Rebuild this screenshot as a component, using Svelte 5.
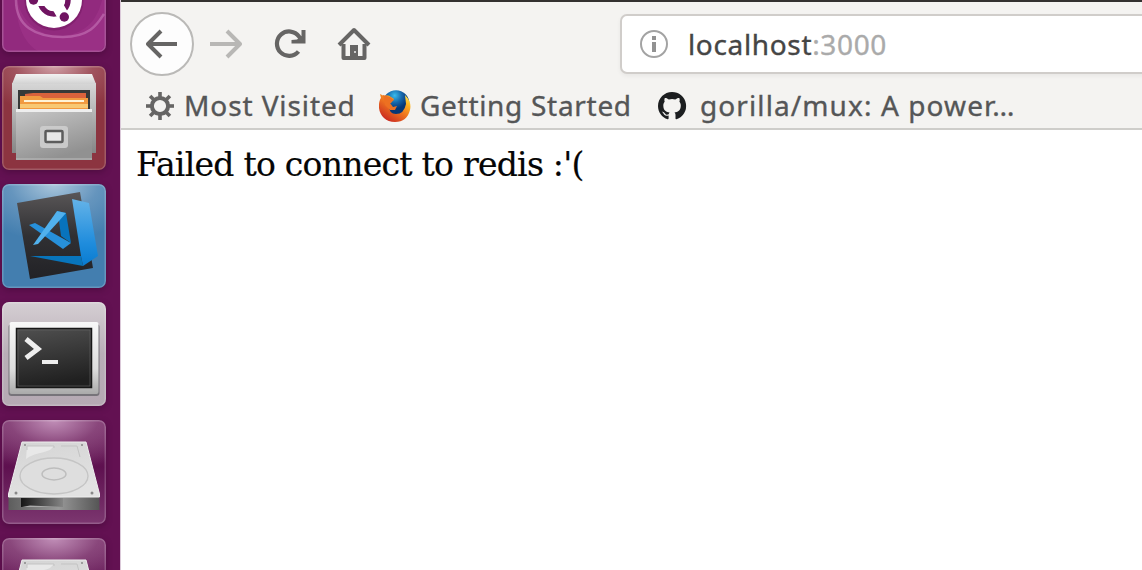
<script>
  const bookmarks = [
    { icon: 'gear', label: 'Most Visited', cls: 'b1' },
    { icon: 'firefox', label: 'Getting Started', cls: 'b2' },
    { icon: 'github', label: 'gorilla/mux: A power…', cls: 'b3' }
  ];
  const apps = ['ubuntu', 'files', 'code', 'terminal', 'disk', 'disk'];
  const teeth = [0, 45, 90, 135, 180, 225, 270, 315];
</script>

<div class="screen">
  <nav class="launcher">
    {#each apps as app}
      <div class="tile {app}">
        <svg viewBox="0 0 104 104" width="104" height="104">
          {#if app === 'ubuntu'}
            <path d="M15 50C12 80 26 98 36 103H93C101 103 103 99 103 89V30C101 70 86 85 61 88C36 89 18 72 15 50" fill="#c04aa5" opacity=".2" />
            <path d="M14 52C14 78 33 89 61 89S96 75 102 66" fill="none" stroke="#d48bc8" stroke-width="2.5" opacity=".45" />
            <circle cx="52" cy="53" r="29.5" fill="#6b1459" opacity=".4" />
            <circle cx="52" cy="52" r="28" fill="#fff" />
            <circle cx="52" cy="52" r="14" fill="none" stroke="#701461" stroke-width="5.5" />
            <path d="M52 52 30 52M52 52 63 71M52 52 63 33" stroke="#fff" stroke-width="12" />
            <circle cx="52" cy="52" r="11" fill="#fff" />
            <circle cx="31.5" cy="52" r="4.7" fill="#701461" /><circle cx="62.3" cy="69" r="4.7" fill="#701461" /><circle cx="62" cy="34" r="4.7" fill="#701461" />
          {:else if app === 'files'}
            <defs>
              <linearGradient id="metal" x2="0" y2="1"><stop stop-color="#d7d7d7" /><stop offset="1" stop-color="#858585" /></linearGradient>
              <linearGradient id="front" x2=".45" y2="1"><stop stop-color="#c9c9c9" /><stop offset="1" stop-color="#919191" /></linearGradient>
              <linearGradient id="lid" x2="0" y2="1"><stop stop-color="#f2f2f2" /><stop offset="1" stop-color="#d2d2d2" /></linearGradient>
            </defs>
            <path d="M10 17H94V87H10Z" fill="url(#metal)" />
            <path d="M14 8H90L94 18H10Z" fill="url(#lid)" />
            <path d="M16 24H88V44H16Z" fill="#373938" />
            <path d="M23 28 31 27H84V40H23Z" fill="#d9623c" />
            <path d="M18 30H38L41 32H86V43H18Z" fill="#f19a40" />
            <path d="M22 35H82" stroke="#fff3d6" stroke-width="2" /><path d="M18 40H86" stroke="#f8c873" stroke-width="4" />
            <path d="M14 43H90V94H14Z" fill="url(#front)" /><path d="M14 43H90V46H14Z" fill="#eee" /><path d="M14 93H90" stroke="#bdbdbd" stroke-width="1" />
            <rect x="38" y="60" width="28" height="22" rx="3" fill="#cacaca" />
            <rect x="43.5" y="65" width="17" height="11" rx="1" fill="#e8e8e8" stroke="#5c5c5c" stroke-width="2.5" />
          {:else if app === 'code'}
            <defs><linearGradient id="dark" x2="0" y2="1"><stop stop-color="#595657" /><stop offset=".5" stop-color="#303033" /><stop offset="1" stop-color="#222226" /></linearGradient>
              <linearGradient id="blue" x2="0" y2="1"><stop stop-color="#64b3e8" /><stop offset=".65" stop-color="#208ddd" /><stop offset="1" stop-color="#087bd0" /></linearGradient></defs>
            <path d="M15 19 78 8 91 84 28 95Z" fill="url(#dark)" />
            <path d="M28 72H79L81 82Z" fill="#0875bc" />
            <path d="M70 15 87 19 96 72 81 82 79 72Z" fill="url(#blue)" />
            <path d="M27 41 33 39 69 59 61 65Z" fill="#2790da" />
            <path d="M55 27 64 29 69 59 59 52 57 37Z" fill="#0873bd" />
            <path d="M55 27 64 29 57 37 36 60 31 61Z" fill="#51b1ed" />
          {:else if app === 'terminal'}
            <defs><linearGradient id="bezel" x2="0" y2="1"><stop stop-color="#f8f8f8" /><stop offset=".65" stop-color="#ddd" /><stop offset="1" stop-color="#aaa" /></linearGradient>
              <linearGradient id="glass" x2=".2" y2="1"><stop stop-color="#505050" /><stop offset=".5" stop-color="#383838" /><stop offset="1" stop-color="#202020" /></linearGradient></defs>
            <rect x="6.5" y="22" width="91" height="72" rx="3" fill="#77747a" />
            <rect x="7.5" y="20" width="89" height="72" rx="2" fill="url(#bezel)" />
            <rect x="14.5" y="26.5" width="75" height="59" fill="url(#glass)" stroke="#171717" stroke-width="1.5" />
            <rect x="16" y="28" width="72" height="56" fill="none" stroke="#666" stroke-width=".6" />
            <path d="m24 37 12 10-12 9" fill="none" stroke="#eee" stroke-width="5" /><path d="M40 60H56" stroke="#eee" stroke-width="4" />
          {:else}
            <defs><linearGradient id="plate" x2=".4" y2="1"><stop stop-color="#d4d4d4" /><stop offset="1" stop-color="#e2e2e2" /></linearGradient>
              <linearGradient id="edge"><stop stop-color="#5d5d5d" /><stop offset=".55" stop-color="#989898" /><stop offset="1" stop-color="#555" /></linearGradient>
              <linearGradient id="slot"><stop stop-color="#161616" /><stop offset="1" stop-color="#858585" /></linearGradient></defs>
            <path d="M6.5 76H97.5V90H6.5Z" fill="url(#edge)" />
            <path d="M20 22H84L97.5 74V77H6.5V74Z" fill="url(#plate)" stroke="#eee" />
            <path d="M25 26H52L48 30C38 34 32 33 24 39Z" fill="#e8e8e8" /><path d="M25 30V26H52V28M59 26H75L78 37" fill="none" stroke="#c3c3c3" />
            <ellipse cx="52" cy="56" rx="34" ry="18" fill="#dedede" stroke="#c5c5c5" stroke-width="1.4" />
            <ellipse cx="52" cy="54" rx="12" ry="6" fill="#dedede" stroke="#bdbdbd" stroke-width="1.4" />
            <path d="M19 78H61V87H19Z" fill="url(#slot)" /><path d="M20 87 28 85.5 61 87Z" fill="#aaa" />
            <circle cx="14" cy="73" r="1.5" fill="#888" /><circle cx="90" cy="73" r="1.5" fill="#888" /><circle cx="23" cy="25" r="1" fill="#888" /><circle cx="80" cy="25" r="1" fill="#888" />
          {/if}
        </svg>
      </div>
    {/each}
  </nav>
  <main class="browser">
    <header>
      <div class="toolbar">
        <button class="back" aria-label="Back"><svg width="32" height="30" viewBox="0 0 32 30"><path d="M15 2 2 15l13 13M3 15H31" fill="none" stroke="#666564" stroke-width="4" stroke-linejoin="round" /></svg></button>
        <svg class="forward" width="32" height="30" viewBox="0 0 32 30"><path d="M17 2 30 15 17 28M0 15H29" fill="none" stroke="#b8b7b5" stroke-width="4" stroke-linejoin="round" /></svg>
        <svg class="reload" width="32" height="32" viewBox="0 0 32 32"><path d="M24.5 23.5A12.2 12.2 0 1 1 25 8.5L27 11" fill="none" stroke="#666564" stroke-width="4.2" /><path d="M31.5 2V15.5H17.5V12L23 11.5 27.5 8V2Z" fill="#666564" /></svg>
        <svg class="home" width="34" height="34" viewBox="0 0 34 34"><path d="M2 18 17 3 32 18M6.5 17V31H27.5V17" fill="none" stroke="#666564" stroke-width="4" stroke-linejoin="round" /><path d="M13 18H21V31H13Z" fill="#666564" /><rect x="17" y="24" width="2" height="2" fill="#ccc" /></svg>
        <div class="address"><svg width="30" height="30" viewBox="0 0 30 30"><circle cx="15" cy="15" r="13" fill="none" stroke="#a3a3a3" stroke-width="2" /><path d="M15 13V23M15 7V11" stroke="#929292" stroke-width="4" /></svg><span class="url">localhost<i>:3000</i></span></div>
      </div>
      <div class="bookmarks">
        {#each bookmarks as item}
          <div class="bookmark {item.cls}">
            <svg viewBox="0 0 32 32">
              {#if item.icon === 'gear'}
                <circle cx="16" cy="16" r="8.1" fill="none" stroke="#666564" stroke-width="4" />
                {#each teeth as a}<path d="M16 2V8" stroke="#666564" stroke-width="3.6" transform="rotate({a} 16 16)" />{/each}
              {:else if item.icon === 'firefox'}
                <defs><radialGradient id="globe" cx=".45" cy=".2"><stop stop-color="#38bbed" /><stop offset=".55" stop-color="#1766aa" /><stop offset="1" stop-color="#073776" /></radialGradient>
                  <linearGradient id="fox" x1="1" y1=".1" x2=".3" y2="1"><stop stop-color="#ffec57" /><stop offset=".25" stop-color="#ffb020" /><stop offset=".55" stop-color="#ee7420" /><stop offset="1" stop-color="#ca2921" /></linearGradient></defs>
                <circle cx="17" cy="13.5" r="13.3" fill="url(#globe)" />
                <path d="M1 4 5 6Q9 4 12 7L15 9 12 13 9 14Q10 24 17 24 25 24 27 14L26 5Q33 12 31 20C29 28 24 32 16 32 7 32 1 26 0 18-.5 13 1 9 2 8Z" fill="url(#fox)" />
                <path d="M4 5 11 7 15 10 11 13 14 17 18 16 16 20 11 20 6 15Z" fill="#ed7021" />
              {:else}
                <path d="M16 2C8.3 2 2 8.3 2 16c0 6.2 4 11.4 9.6 13.3.7.1 1-.3 1-.7v-3c-4 1-4.8-1.5-5.3-2.3-.5-.8-1.1-1.1-1.6-1.5 1.8-.6 2.8 1 3.3 1.7 1 1.7 2.6 1.2 3.7.8.1-.9.5-1.5.9-1.8-3.1-.4-6.3-1.6-6.3-7 0-1.5.5-2.8 1.4-3.8-.3-.8-.6-2 .1-3.7 1.2-.3 2.7.4 4 1.4a14 14 0 0 1 6.5 0c1.3-1 2.8-1.7 4-1.4.7 1.7.4 2.9.1 3.7.9 1 1.4 2.3 1.4 3.8 0 5.4-3.2 6.6-6.3 7 .6.5 1 1.4 1 2.6v3.5c0 .4.3.8 1 .7A14 14 0 0 0 16 2Z" fill="#1c1e20" />
              {/if}
            </svg><span>{item.label}</span>
          </div>
        {/each}
      </div>
    </header>
    <section><p>Failed to connect to redis :'(</p></section>
  </main>
</div>

<style>
  :global(body) { margin: 0; overflow: hidden; }
  .screen { display: flex; width: 1142px; height: 570px; overflow: hidden; background: #fff; }
  .launcher { width: 120px; flex: none; box-sizing: border-box; display: flex; flex-direction: column; gap: 14px; padding-left: 2px; height: 570px; background: #631152; overflow: hidden; }
  .tile { width: 104px; height: 104px; flex: none; border-radius: 7px; overflow: hidden; box-shadow: inset 0 0 0 1.5px #ffffff30, 0 2px 6px #35062b70; }
  .tile svg { display: block; }
  .ubuntu { margin-top: -52px; background: #922a7e; }
  .files { background: radial-gradient(75% 45% at 50% 0, #d0a0a6, #ae687299 50%, transparent), #8c3440; }
  .code { background: radial-gradient(85% 55% at 50% 0, #abc7dc, #7ca4c799 50%, transparent), #437eaf; }
  .terminal { background: linear-gradient(#d5cfd3, #b9aeb7 50%, #b5a9b3); }
  .disk { background: radial-gradient(85% 50% at 50% 0, #c18fb8, #94548699 50%, transparent), linear-gradient(#7e3870, #5e104f 45%, #7c3770); }
  .browser { width: 1022px; flex: none; box-sizing: border-box; border-left: 1px solid #dbc9d9; background: #fff; }
  header { height: 130px; box-sizing: border-box; border-top: 2px solid #343130; border-bottom: 2px solid #cecdca; background: #f4f3f1; font-family: "Noto Sans", sans-serif; }
  .toolbar { height: 84px; display: flex; align-items: center; box-sizing: border-box; padding-left: 9px; overflow: hidden; }
  .toolbar > svg { flex: none; }
  .back { width: 64px; height: 64px; flex: none; border: 2px solid #bab9b7; border-radius: 50%; background: #fdfdfd; padding: 0; display: flex; justify-content: center; align-items: center; }
  .forward { margin-left: 16px; }
  .reload { margin-left: 32px; }
  .home { margin-left: 31px; }
  .address { margin-left: 249px; width: 540px; height: 60px; flex: none; box-sizing: border-box; border: 2px solid #d0cdca; border-radius: 7px; background: #fff; box-shadow: 0 2px 4px #0000000d; display: flex; align-items: center; padding-left: 17px; }
  .url { margin-left: 19px; font-size: 28px; line-height: 40px; color: #454545; letter-spacing: .65px; -webkit-text-stroke: .35px currentColor; }
  .url i { font-style: normal; color: #aaa; }
  .bookmarks { height: 39px; display: flex; align-items: center; padding-left: 23px; color: #555657; font-size: 28px; line-height: 36px; white-space: nowrap; -webkit-text-stroke: .35px currentColor; }
  .bookmark { display: flex; align-items: center; flex: none; }
  .bookmark svg { width: 32px; height: 32px; flex: none; -webkit-text-stroke: 0; }
  .bookmark span { padding-bottom: 1px; }
  .b1 { width: 235px; letter-spacing: .9px; } .b2 { width: 277px; letter-spacing: .7px; } .b3 { letter-spacing: 1.1px; }
  .b1 span { margin-left: 8px; }
  .b2 span { margin-left: 9px; }
  .b3 span { margin-left: 12px; }
  section { padding: 15px 15px 0; }
  p { margin: 0; color: #050505; font: 33px/39px "DejaVu Serif", serif; letter-spacing: -.74px; white-space: nowrap; -webkit-text-stroke: .2px currentColor; }
</style>
